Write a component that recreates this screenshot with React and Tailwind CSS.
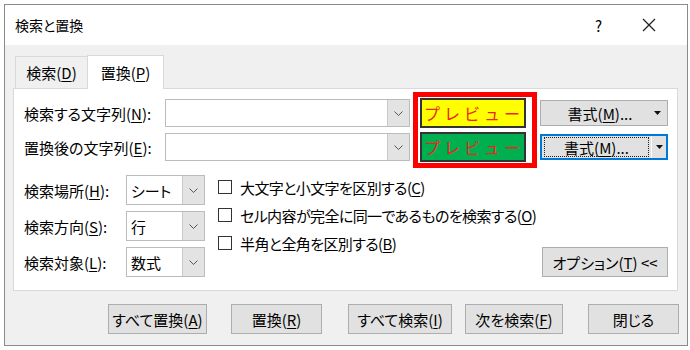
import React from "react";

const U = ({ children }) => <span className="underline underline-offset-2">{children}</span>;

const Chevron = () => (
  <svg width="9" height="5" viewBox="0 0 9 5" className="block">
    <polyline points="0.5,0.5 4.5,4.5 8.5,0.5" fill="none" stroke="#555" strokeWidth="1" />
  </svg>
);

const Tri = () => (
  <svg width="7" height="4" viewBox="0 0 7 4" className="block">
    <polygon points="0,0 7,0 3.5,4" fill="#111" />
  </svg>
);

const Combo = ({ text, w, h }) => (
  <div className={`flex ${w} ${h} border border-[#bcbcbc] bg-white`}>
    <div className="flex-1 flex items-center pl-[4px]">{text}</div>
    <div className="w-[22px] flex items-center justify-center bg-[#e3e3e3] border-l border-[#c8c8c8]">
      <Chevron />
    </div>
  </div>
);

const Btn = ({ children, className }) => (
  <div className={`flex items-center justify-center h-[30px] bg-[#e1e1e1] border border-[#adadad] whitespace-nowrap ${className}`}>
    {children}
  </div>
);

const Check = ({ children }) => (
  <div className="flex items-center h-[24px] whitespace-nowrap">
    <div className="w-[14px] h-[14px] border border-[#333] bg-white mr-[8px] shrink-0" />
    <span className="tracking-[-0.6px]">{children}</span>
  </div>
);

const Preview = ({ bg }) => (
  <div className={`flex items-center h-[30px] w-[106px] ${bg} border-2 border-[#333] text-[#f0231a] text-[16px] tracking-[4px] whitespace-nowrap overflow-hidden pl-[2px] [font-feature-settings:'pwid'_0]`}>
    <span style={{ fontFeatureSettings: "normal" }}>プレビュー</span>
  </div>
);

export default function App() {
  return (
    <div
      className="w-[690px] h-[350px] bg-white pt-[4px] pl-[4px] text-[15px] text-black leading-none [font-feature-settings:'palt']"
      style={{ fontFamily: '"Noto Sans CJK JP", "Noto Sans", sans-serif' }}
    >
      <div className="w-[684px] h-[342px] border border-[#8a8a8a] flex flex-col">
        {/* title bar */}
        <div className="h-[40px] bg-white flex items-center pl-[10px] shrink-0">
          <span className="text-[14px]">検索と置換</span>
          <span className="ml-auto mr-[40px] text-[15px]">?</span>
          <svg width="14" height="14" viewBox="0 0 14 14" className="mr-[31px]">
            <path d="M1 1 L13 13 M13 1 L1 13" stroke="#222" strokeWidth="1.3" />
          </svg>
        </div>

        {/* body */}
        <div className="flex-1 bg-[#f0f0f0] pl-[8px] pt-[10px]">
          {/* tabs */}
          <div className="flex items-end h-[33px]">
            <div className="ml-[2px] w-[72px] h-[32px] flex items-center justify-center border-t border-l border-[#d9d9d9] bg-[#f0f0f0]">
              検索(<U>D</U>)
            </div>
            <div className="relative z-10 -mb-px w-[77px] h-[34px] flex items-center justify-center border-t border-l border-r border-[#d9d9d9] bg-white pb-px">
              置換(<U>P</U>)
            </div>
          </div>

          {/* panel */}
          <div className="w-[665px] h-[203px] bg-white border border-[#d9d9d9] pl-[10px]">
            {/* top section */}
            <div className="flex mt-[3px]">
              <div className="flex flex-col gap-[6px] pt-[7px]">
                <div className="flex items-center">
                  <div className="w-[141px]">検索する文字列(<U>N</U>):</div>
                  <Combo text="" w="w-[245px]" h="h-[28px]" />
                </div>
                <div className="flex items-center">
                  <div className="w-[141px]">置換後の文字列(<U>E</U>):</div>
                  <Combo text="" w="w-[245px]" h="h-[28px]" />
                </div>
              </div>

              <div className="ml-[3px] w-[124px] h-[76px] border-[5px] border-[#ff0000] flex flex-col gap-[4px] pl-[2px] pt-px">
                <Preview bg="bg-[#ffff00]" />
                <Preview bg="bg-[#00b050]" />
              </div>

              <div className="ml-[3px] flex flex-col gap-[8px] pt-[8px]">
                <div className="relative w-[128px] h-[26px] bg-[#e1e1e1] border border-[#adadad] flex items-center justify-center">
                  <span className="mr-[8px]">書式(<U>M</U>)...</span>
                  <span className="absolute right-[6px] top-[10px]"><Tri /></span>
                </div>
                <div className="w-[128px] h-[26px] bg-[#e1e1e1] border-2 border-[#0078d7] flex items-center">
                  <div className="flex-1 h-[20px] ml-[2px] border border-dotted border-[#222] flex items-center justify-center">
                    書式(<U>M</U>)...
                  </div>
                  <div className="w-px h-[22px] bg-white ml-[2px]" />
                  <div className="w-[14px] flex items-center justify-center"><Tri /></div>
                </div>
              </div>
            </div>

            {/* lower section */}
            <div className="flex mt-[7px]">
              <div className="flex flex-col gap-[6px]">
                <div className="flex items-center">
                  <div className="w-[102px]">検索場所(<U>H</U>):</div>
                  <Combo text="シート" w="w-[79px]" h="h-[30px]" />
                </div>
                <div className="flex items-center">
                  <div className="w-[102px]">検索方向(<U>S</U>):</div>
                  <Combo text="行" w="w-[79px]" h="h-[30px]" />
                </div>
                <div className="flex items-center">
                  <div className="w-[102px]">検索対象(<U>L</U>):</div>
                  <Combo text="数式" w="w-[79px]" h="h-[30px]" />
                </div>
              </div>

              <div className="ml-[13px] flex flex-col gap-[4px] w-[310px]">
                <Check>大文字と小文字を区別する(<U>C</U>)</Check>
                <Check>セル内容が完全に同一であるものを検索する(<U>O</U>)</Check>
                <Check>半角と全角を区別する(<U>B</U>)</Check>
              </div>

              <div className="self-end ml-auto mr-[9px]">
                <Btn className="w-[126px]">オプション(<U>T</U>)&nbsp;&lt;&lt;</Btn>
              </div>
            </div>
          </div>

          {/* bottom buttons */}
          <div className="flex mt-[13px]">
            <Btn className="ml-[95px] w-[99px]">すべて置換(<U>A</U>)</Btn>
            <Btn className="ml-[24px] w-[91px]">置換(<U>R</U>)</Btn>
            <Btn className="ml-[26px] w-[104px]">すべて検索(<U>I</U>)</Btn>
            <Btn className="ml-[13px] w-[98px]">次を検索(<U>F</U>)</Btn>
            <Btn className="ml-[25px] w-[91px]">閉じる</Btn>
          </div>
        </div>
      </div>
    </div>
  );
}
